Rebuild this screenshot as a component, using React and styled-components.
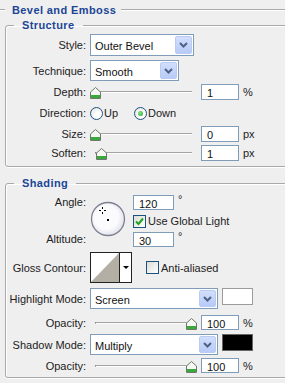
import React from 'react';
import styled, { createGlobalStyle } from 'styled-components';

const GlobalStyle = createGlobalStyle`
  html, body {
    margin: 0;
    padding: 0;
  }
  body {
    background: #efefef;
    font-family: "Liberation Sans", Arial, sans-serif;
    font-size: 11px;
    color: #222;
    overflow: hidden;
  }
`;

const Panel = styled.div`
  width: 285px;
  height: 383px;
  overflow: hidden;
  padding-top: 3px;
  box-sizing: border-box;
`;

const TitleBar = styled.div`
  display: flex;
  align-items: center;
  height: 14px;
  &::before,
  &::after {
    content: '';
    height: 0;
    border-top: 1px solid #a9a9a9;
    border-bottom: 1px solid #fff;
  }
  &::before {
    width: 5px;
    margin-right: 7px;
  }
  &::after {
    flex: 1;
    margin-left: 5px;
  }
`;

const Title = styled.span`
  font-weight: bold;
  color: #1b4596;
  letter-spacing: 0.4px;
`;

const Group = styled.fieldset`
  margin: ${p => p.$top}px -20px 0 5px;
  padding: 0 0 ${p => p.$bottom}px 0;
  border: 1px solid #a9a9a9;
  border-radius: 3px;
  box-shadow: inset 1px 1px 0 #fff, 1px 1px 0 #fff;
  min-width: 0;
`;

const Legend = styled.legend`
  margin-left: 8px;
  padding: 0 8px;
  font-weight: bold;
  color: #1b4596;
  letter-spacing: 0.4px;
  line-height: 13px;
`;

const Row = styled.div`
  display: flex;
  align-items: center;
  height: ${p => p.$h}px;
  margin-top: ${p => p.$mt}px;
`;

const Label = styled.div`
  width: 84px;
  flex: none;
  padding-right: 4px;
  box-sizing: border-box;
  text-align: right;
  white-space: nowrap;
`;

const Select = styled.div`
  width: ${p => p.$w}px;
  height: 100%;
  flex: none;
  box-sizing: border-box;
  border: 1px solid #7f9db9;
  background: #fff;
  display: flex;
  align-items: stretch;
  padding: 1px;
`;

const SelectText = styled.span`
  flex: 1;
  display: flex;
  align-items: center;
  padding: 2px 0 0 3px;
  color: #111;
`;

const DropButton = styled.span`
  width: 17px;
  box-sizing: border-box;
  border: 1px solid #b9cbf3;
  border-radius: 2px;
  background: linear-gradient(#d2defc, #b7cbf7);
  display: flex;
  align-items: center;
  justify-content: center;
`;

const Field = styled.input`
  width: 38px;
  height: 100%;
  flex: none;
  box-sizing: border-box;
  border: 1px solid #7f9db9;
  background: #fff;
  font: inherit;
  color: #111;
  padding: 2px 0 0 5px;
  margin: 0;
  outline: none;
`;

const Unit = styled.span`
  margin-left: 4px;
  align-self: ${p => (p.$sup ? 'flex-start' : 'center')};
  line-height: ${p => (p.$sup ? '9px' : 'normal')};
`;

const SliderBox = styled.div`
  position: relative;
  width: 107px;
  height: 100%;
  flex: none;
  margin-right: 4px;
  display: flex;
  align-items: center;
  padding: 0 5px;
  box-sizing: border-box;
`;

const Track = styled.div`
  flex: 1;
  height: 0;
  border-top: 1px solid #a3a3a3;
  border-bottom: 1px solid #fdfdfd;
  border-left: 1px solid #666;
`;

const Thumb = styled.svg`
  position: absolute;
  top: 50%;
  margin-top: -5px;
`;

const RadioOption = styled.label`
  display: flex;
  align-items: center;
  min-width: 44px;
  gap: 1px;
`;

const RadioDot = styled.span`
  width: 13px;
  height: 13px;
  box-sizing: border-box;
  border-radius: 50%;
  border: 1px solid #1c5180;
  background: radial-gradient(circle at 65% 65%, #fff 30%, #dcdcd5);
  display: flex;
  align-items: center;
  justify-content: center;
  &::after {
    content: '';
    display: ${p => (p.$checked ? 'block' : 'none')};
    width: 5px;
    height: 5px;
    border-radius: 50%;
    background: radial-gradient(circle at 40% 40%, #8ce68c, #21a121);
  }
`;

const CheckBox = styled.span`
  width: 13px;
  height: 13px;
  flex: none;
  box-sizing: border-box;
  border: 1px solid #1c5180;
  background: linear-gradient(135deg, #dcdcd5, #fff);
  display: flex;
  align-items: center;
  justify-content: center;
`;

const CheckOption = styled.label`
  display: flex;
  align-items: center;
  gap: 2px;
  margin-left: ${p => p.$ml || 0}px;
`;

const AngleBlock = styled.div`
  display: flex;
  margin-top: 5px;
  height: 53px;
`;

const LabelColumn = styled.div`
  display: flex;
  flex-direction: column;
  justify-content: space-between;
  padding: 1px 0 3px;
`;

const Dial = styled.svg`
  margin: 6px 0 0 0;
  flex: none;
`;

const DialSide = styled.div`
  display: flex;
  flex-direction: column;
  margin-left: 7px;
  gap: 5px;
`;

const SideRow = styled.div`
  display: flex;
  height: ${p => p.$h}px;
  align-items: center;
`;

const Contour = styled.div`
  display: flex;
  width: 42px;
  height: 31px;
  flex: none;
  box-sizing: border-box;
  border: 1px solid #222;
  background: #fff;
`;

const ContourArrow = styled.div`
  flex: 1;
  border-left: 1px solid #222;
  display: flex;
  align-items: center;
  justify-content: center;
  &::after {
    content: '';
    border-left: 3px solid transparent;
    border-right: 3px solid transparent;
    border-top: 3px solid #000;
  }
`;

const Swatch = styled.div`
  width: 31px;
  height: 17px;
  flex: none;
  align-self: flex-start;
  margin-left: 4px;
  box-sizing: border-box;
  border: 1px solid ${p => (p.$color === '#000' ? '#666' : '#9c9c9c')};
  background: ${p => p.$color};
`;

const Chevron = () => (
  <svg width="9" height="6" viewBox="0 0 9 6">
    <path d="M1 1 L4.5 4.5 L8 1" fill="none" stroke="#4d6185" strokeWidth="2" />
  </svg>
);

const Check = () => (
  <svg width="9" height="9" viewBox="0 0 9 9">
    <path d="M1 4.5 L3.5 7 L8 1.5" fill="none" stroke="#21a121" strokeWidth="2" />
  </svg>
);

const Slider = ({ value, min, max }) => {
  const left = ((value - min) / (max - min)) * 96;
  return (
    <SliderBox>
      <Track />
      <Thumb width="11" height="12" viewBox="0 0 11 12" style={{ left }}>
        <path d="M5.5 0.5 L10.5 5 V11.5 H0.5 V5 Z" fill="#f4f7f2" stroke="#6e786c" />
        <rect x="1" y="8" width="9" height="3" fill="#3aa83a" />
      </Thumb>
    </SliderBox>
  );
};

const DropSelect = ({ w, children }) => (
  <Select $w={w}>
    <SelectText>{children}</SelectText>
    <DropButton>
      <Chevron />
    </DropButton>
  </Select>
);

const SliderRow = ({ label, mt, h, value, min, max, unit }) => (
  <Row $mt={mt} $h={h}>
    <Label>{label}</Label>
    <Slider value={value} min={min} max={max} />
    <Field readOnly value={value} />
    <Unit>{unit}</Unit>
  </Row>
);

const App = () => (
  <Panel>
    <GlobalStyle />
    <TitleBar>
      <Title>Bevel and Emboss</Title>
    </TitleBar>

    <Group $top={2} $bottom={5}>
      <Legend>Structure</Legend>
      <Row $mt={2} $h={22}>
        <Label>Style:</Label>
        <DropSelect w={104}>Outer Bevel</DropSelect>
      </Row>
      <Row $mt={4} $h={21}>
        <Label>Technique:</Label>
        <DropSelect w={89}>Smooth</DropSelect>
      </Row>
      <SliderRow label="Depth:" mt={3} h={16} value={1} min={1} max={1000} unit="%" />
      <Row $mt={6} $h={14}>
        <Label>Direction:</Label>
        <RadioOption>
          <RadioDot />
          Up
        </RadioOption>
        <RadioOption>
          <RadioDot $checked />
          Down
        </RadioOption>
      </Row>
      <SliderRow label="Size:" mt={6} h={16} value={0} min={0} max={250} unit="px" />
      <SliderRow label="Soften:" mt={3} h={16} value={1} min={0} max={16} unit="px" />
    </Group>

    <Group $top={10} $bottom={4}>
      <Legend>Shading</Legend>
      <AngleBlock>
        <LabelColumn>
          <Label>Angle:</Label>
          <Label>Altitude:</Label>
        </LabelColumn>
        <Dial width="36" height="36" viewBox="0 0 36 36">
          <defs>
            <radialGradient id="dialFill" cx="0.45" cy="0.45" r="0.6">
              <stop offset="0.6" stopColor="#fbfbfd" />
              <stop offset="1" stopColor="#dcdce6" />
            </radialGradient>
          </defs>
          <circle cx="18" cy="18" r="16.5" fill="url(#dialFill)" stroke="#7d8093" strokeWidth="1.3" />
          <rect x="17" y="18" width="2" height="2" fill="#000" />
          <g stroke="#000" strokeWidth="1">
            <path d="M12.5 6 V8 M12.5 11 V13 M9 9.5 H11 M14 9.5 H16" />
          </g>
        </Dial>
        <DialSide>
          <SideRow $h={15}>
            <Field readOnly value="120" style={{ width: 41 }} />
            <Unit $sup>°</Unit>
          </SideRow>
          <SideRow $h={12}>
            <CheckOption>
              <CheckBox>
                <Check />
              </CheckBox>
              Use Global Light
            </CheckOption>
          </SideRow>
          <SideRow $h={15}>
            <Field readOnly value="30" style={{ width: 41 }} />
            <Unit $sup>°</Unit>
          </SideRow>
        </DialSide>
      </AngleBlock>

      <Row $mt={4} $h={31}>
        <Label>Gloss Contour:</Label>
        <Contour>
          <svg width="28" height="29" viewBox="0 0 28 29">
            <polygon points="0,29 28,0 28,29" fill="#b3afa4" />
          </svg>
          <ContourArrow />
        </Contour>
        <CheckOption $ml={14}>
          <CheckBox />
          Anti-aliased
        </CheckOption>
      </Row>

      <Row $mt={5} $h={21}>
        <Label>Highlight Mode:</Label>
        <DropSelect w={128}>Screen</DropSelect>
        <Swatch $color="#fff" />
      </Row>
      <SliderRow label="Opacity:" mt={6} h={15} value={100} min={0} max={100} unit="%" />
      <Row $mt={4} $h={21}>
        <Label>Shadow Mode:</Label>
        <DropSelect w={128}>Multiply</DropSelect>
        <Swatch $color="#000" />
      </Row>
      <SliderRow label="Opacity:" mt={3} h={15} value={100} min={0} max={100} unit="%" />
    </Group>
  </Panel>
);

export default App;
